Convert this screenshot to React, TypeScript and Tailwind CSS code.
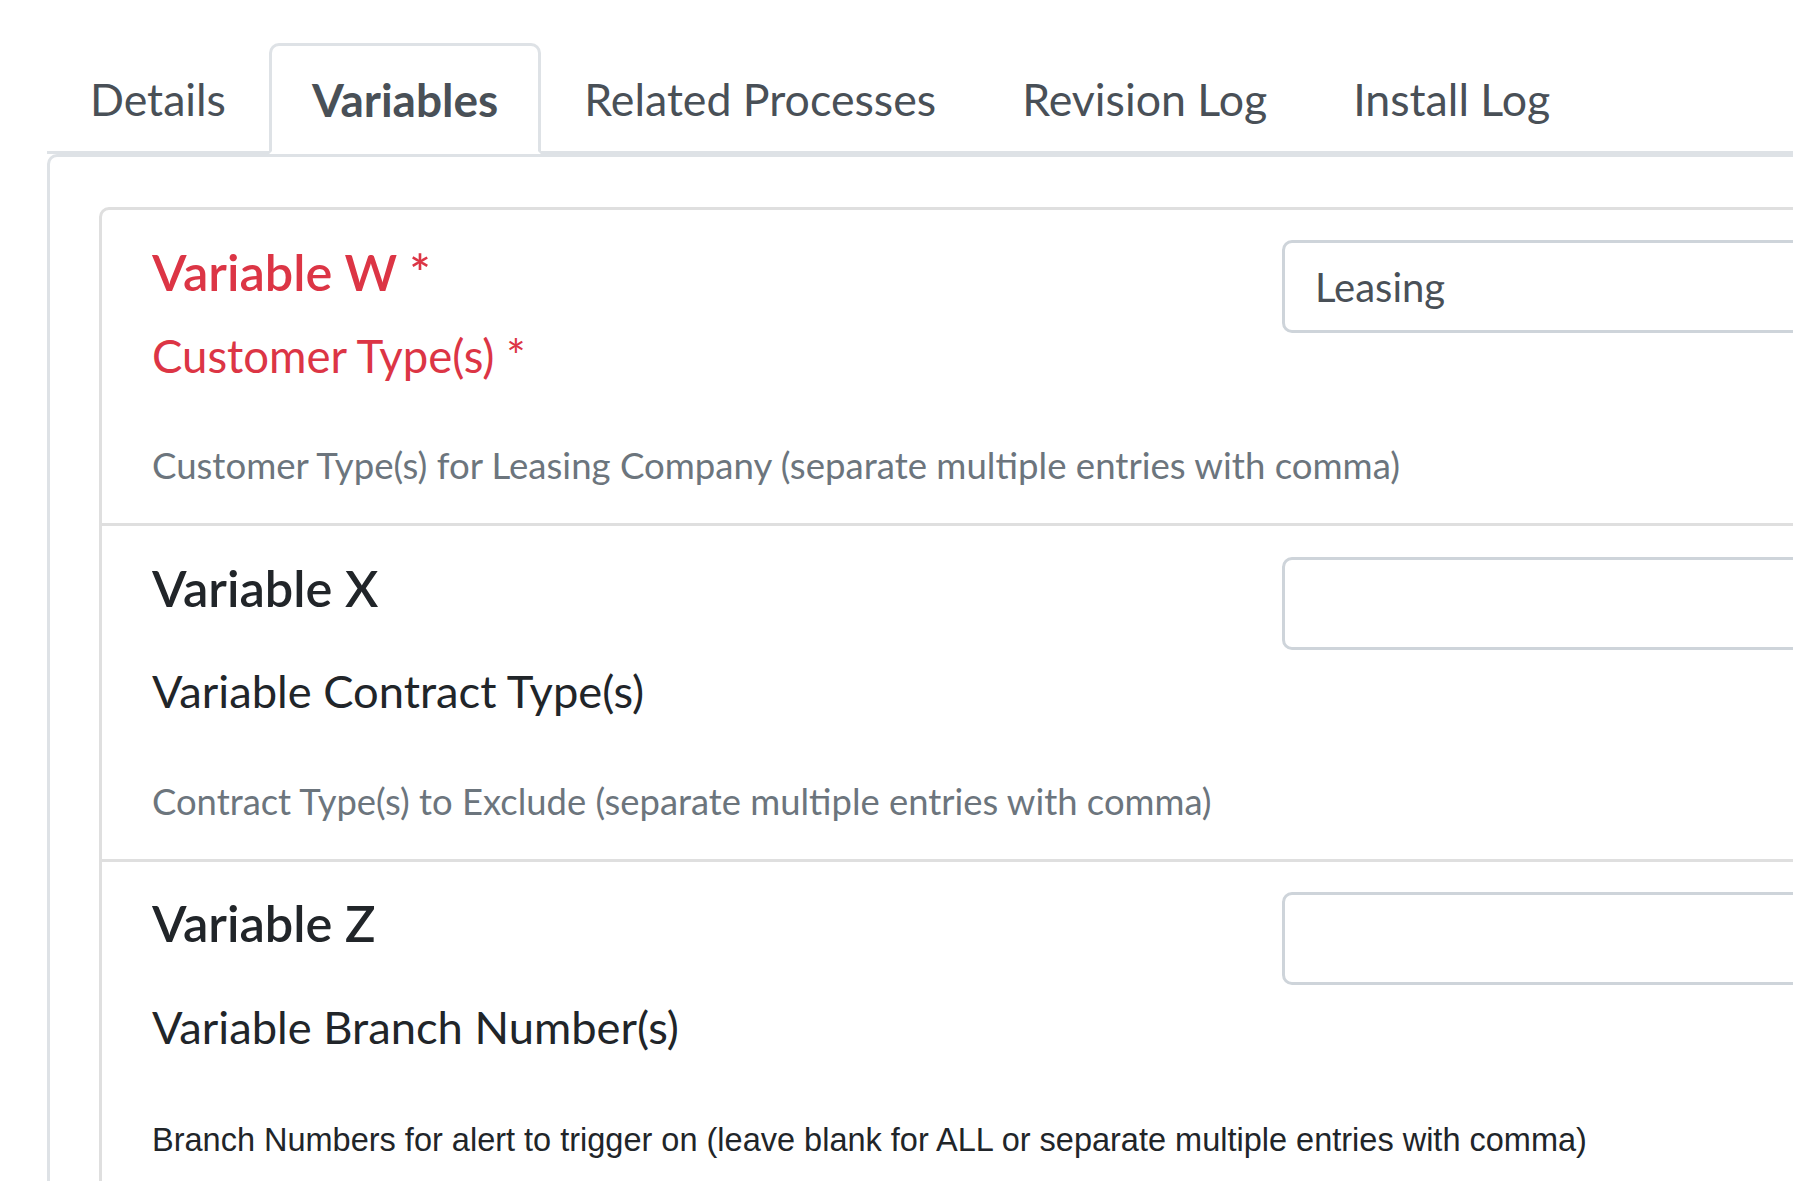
const tabs = ["Details", "Variables", "Related Processes", "Revision Log", "Install Log"];

function Input({ value }: { value?: string }) {
  return (
    <div className="flex h-[93px] w-[900px] shrink-0 items-center rounded-[10px] border-[3px] border-[#ced4da] pl-[30px] text-[40px] text-[#495057]">
      {value}
    </div>
  );
}

export default function App() {
  return (
    <div className="h-[1181px] w-[1793px] overflow-hidden bg-white pl-[47px] pt-[43px] font-['Lato',sans-serif]">
      <div className="w-[2400px]">
        {/* tabs */}
        <ul className="flex border-b-[3px] border-[#dee2e6]">
          {tabs.map((t) => {
            const active = t === "Variables";
            return (
              <li key={t} className="-mb-[3px]">
                <a
                  className={
                    active
                      ? "flex h-[111px] items-center rounded-t-[10px] border-[3px] border-[#dee2e6] border-b-white bg-white px-[40px] pt-[2px] text-[46px] font-bold text-[#495057]"
                      : "flex h-[111px] items-center rounded-t-[10px] border-[3px] border-transparent px-[40px] pt-[2px] text-[44.7px] text-[#495057]"
                  }
                >
                  {t}
                </a>
              </li>
            );
          })}
        </ul>

        {/* tab content */}
        <div className="rounded-tl-[10px] border-l-[3px] border-t-[3px] border-[#dee2e6] pl-[49px] pt-[50px]">
          <div className="rounded-[10px] border-[3px] border-[#dfdfdf]">
            {/* Variable W */}
            <div className="border-b-[3px] border-[#dfdfdf] pb-[30px] pl-[50px] pt-[30px]">
              <div className="flex">
                <div className="w-[1130px] shrink-0">
                  <div className="mt-[1px] text-[50.5px] font-semibold leading-[62px] text-[#dc3545]">Variable W *</div>
                  <div className="mt-[22px] text-[45.5px] leading-[62px] text-[#dc3545]">Customer Type(s) *</div>
                </div>
                <Input value="Leasing" />
              </div>
              <div className="mt-[50px] whitespace-nowrap text-[36.6px] leading-[56px] text-[#6c757d]">
                Customer Type(s) for Leasing Company (separate multiple entries with comma)
              </div>
            </div>

            {/* Variable X */}
            <div className="border-b-[3px] border-[#dfdfdf] pb-[30px] pl-[50px] pt-[31px]">
              <div className="flex">
                <div className="w-[1130px] shrink-0">
                  <div className="text-[50.5px] font-semibold leading-[62px] text-[#212529]">Variable X</div>
                  <div className="mt-[41px] text-[45.3px] leading-[62px] text-[#212529]">Variable Contract Type(s)</div>
                </div>
                <Input />
              </div>
              <div className="mt-[51px] whitespace-nowrap text-[36.4px] leading-[56px] text-[#6c757d]">
                Contract Type(s) to Exclude (separate multiple entries with comma)
              </div>
            </div>

            {/* Variable Z */}
            <div className="pb-[26px] pl-[50px] pt-[30px]">
              <div className="flex">
                <div className="w-[1130px] shrink-0">
                  <div className="text-[50.5px] font-semibold leading-[62px] text-[#212529]">Variable Z</div>
                  <div className="mt-[42px] text-[45.3px] leading-[62px] text-[#212529]">Variable Branch Number(s)</div>
                </div>
                <Input />
              </div>
              <div className="mt-[54px] whitespace-nowrap font-['Liberation_Sans',Arial,sans-serif] text-[32.5px] leading-[56px] text-[#212529]">
                Branch Numbers for alert to trigger on (leave blank for ALL or separate multiple entries with comma)
              </div>
            </div>
          </div>
        </div>
      </div>
    </div>
  );
}
